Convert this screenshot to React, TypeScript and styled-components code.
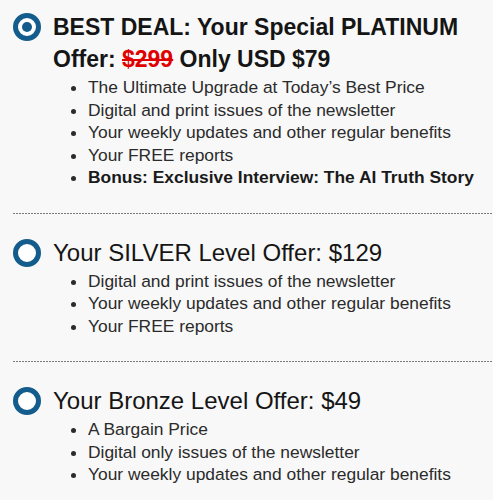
import { FC, ReactNode } from 'react';
import styled, { createGlobalStyle } from 'styled-components';

interface Offer {
  selected?: boolean;
  title: ReactNode;
  bold?: boolean;
  perks: ReactNode[];
}

const GlobalStyle = createGlobalStyle`
  html, body {
    margin: 0;
    background: #f8f8f8;
  }
  body {
    font-family: "Liberation Sans", Arial, sans-serif;
  }
`;

const Page = styled.main`
  padding: 11px 0 0 13px;
  width: 493px;
  box-sizing: border-box;
`;

const Block = styled.section`
  padding-bottom: 24px;
`;

const Divider = styled.div`
  height: 1px;
  margin-bottom: 23px;
  background-image: repeating-linear-gradient(to right, #7a7a7a 0 2px, transparent 2px 3px);
`;

const Heading = styled.div`
  display: flex;
  align-items: flex-start;
  gap: 12px;
`;

const Radio = styled.span<{ $checked: boolean }>`
  flex: none;
  position: relative;
  width: 28px;
  height: 28px;
  margin-top: 2px;
  box-sizing: border-box;
  border: 5px solid #135c8b;
  border-radius: 50%;
  background: #fff;

  ${ props => props.$checked && `
    &::after {
      content: '';
      position: absolute;
      left: 4px;
      top: 4px;
      width: 10px;
      height: 10px;
      border-radius: 50%;
      background: #135c8b;
    }
  ` }
`;

const Title = styled.h2<{ $bold: boolean }>`
  margin: 0;
  font-size: ${ props => props.$bold ? '23px' : '24px' };
  line-height: 32px;
  color: #151515;
  font-weight: ${ props => props.$bold ? 700 : 400 };
`;

const OldPrice = styled.s`
  color: #e00000;
`;

const Perks = styled.ul`
  margin: 1px 0 0;
  padding-left: 75px;
  font-size: 17.4px;
  line-height: 22.5px;
  color: #2b2b2b;

  strong {
    color: #1a1a1a;
  }
`;

// data lives below the styled parts since the title uses OldPrice
const offers: Offer[] = [
  {
    selected: true,
    bold: true,
    title: <>BEST DEAL: Your Special PLATINUM Offer: <OldPrice>$299</OldPrice> Only USD $79</>,
    perks: [
      'The Ultimate Upgrade at Today\u2019s Best Price',
      'Digital and print issues of the newsletter',
      'Your weekly updates and other regular benefits',
      'Your FREE reports',
      <strong key='bonus'>Bonus: Exclusive Interview: The AI Truth Story</strong>,
    ],
  },
  {
    title: 'Your SILVER Level Offer: $129',
    perks: [
      'Digital and print issues of the newsletter',
      'Your weekly updates and other regular benefits',
      'Your FREE reports',
    ],
  },
  {
    title: 'Your Bronze Level Offer: $49',
    perks: [
      'A Bargain Price',
      'Digital only issues of the newsletter',
      'Your weekly updates and other regular benefits',
    ],
  },
];

const OfferBlock: FC<{ offer: Offer }> = ({ offer }) => (
  <Block>
    <Heading>
      <Radio $checked={ !!offer.selected } />
      <Title $bold={ !!offer.bold }>{ offer.title }</Title>
    </Heading>
    <Perks>
      { offer.perks.map((perk, i) => <li key={ i }>{ perk }</li>) }
    </Perks>
  </Block>
);

const App: FC = () => (
  <>
    <GlobalStyle />
    <Page>
      { offers.map((offer, i) => (
        <div key={ i }>
          { i > 0 && <Divider /> }
          <OfferBlock offer={ offer } />
        </div>
      )) }
    </Page>
  </>
);

export default App;
